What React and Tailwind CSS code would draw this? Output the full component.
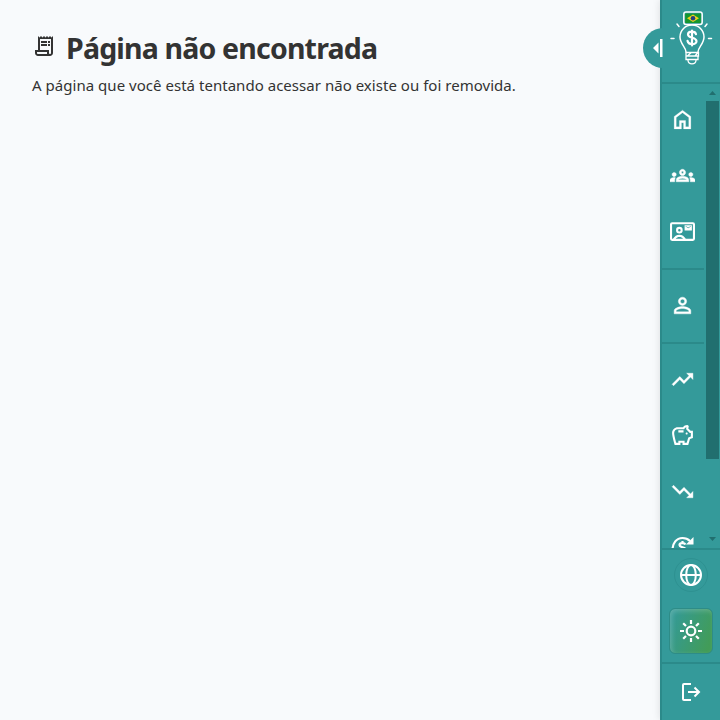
import {
  MdOutlineGroups,
  MdTrendingUp,
  MdTrendingDown,
  MdOutlineSavings,
  MdPersonOutline,
  MdOutlineReceiptLong,
} from "react-icons/md";

const navIcon =
  "size-[25px] [&_path:not([fill=none])]:stroke-current [&_path:not([fill=none])]:stroke-[0.4px]";

function HomeIcon() {
  return (
    <svg viewBox="0 -960 960 960" className="size-[25px]" fill="currentColor" stroke="currentColor" strokeWidth="8">
      <path d="M240-200h120v-240h240v240h120v-360L480-740 240-560v360Zm-80 80v-480l320-240 320 240v480H520v-240h-80v240H160Z" />
    </svg>
  );
}

function ContactMailIcon() {
  return (
    <svg viewBox="0 0 24 24" className="size-[25px]" fill="currentColor">
      <path fillRule="evenodd" d="M2 3h20q2 0 2 2v14q0 2-2 2H2q-2 0-2-2V5q0-2 2-2zm0 2v14h.8C4.200 16.500 6.500 15 9 15s4.800 1.500 6.200 4H22V5z" />
      <path fillRule="evenodd" d="M9 7.500a3.200 3.200 0 1 1 0 6.400 3.200 3.200 0 0 1 0-6.400zm0 2a1.200 1.200 0 1 0 0 2.400 1.200 1.200 0 0 0 0-2.400zM14 6h7v5h-7zm1 1.200 2.500 1.700L20 7.200V6.700l-2.500 1.500L15 6.700z" />
      <path d="M5.500 19h7C11 16.700 7 16.700 5.500 19z" fill="#349a9a" />
    </svg>
  );
}

function ExchangeIcon() {
  return (
    <svg viewBox="0 0 25 25" className="size-[25px]" fill="none" stroke="currentColor" strokeWidth="2.200">
      <path d="M2.500 15.500C2.500 8 6.500 3 12.500 3c3.500 0 6 1.500 7.500 3" />
      <path d="M23.500 2v7.500H16z" fill="currentColor" stroke="none" />
      <path d="M15.500 9.500c-1-2-6-2-6 .5 0 3 6 1.500 6 4.500 0 2.500-5 2.500-6.500 0M12.500 6v2" />
    </svg>
  );
}

function SunIcon() {
  return (
    <svg viewBox="0 0 24 24" className="size-6" fill="none" stroke="currentColor" strokeWidth="2.200">
      <circle cx="12" cy="12" r="4.300" />
      <path d="M12 1v4M12 19v4M1 12h4M19 12h4M4.200 4.200L7 7M17 17l2.800 2.800M4.200 19.800L7 17M17 7l2.800-2.800" />
    </svg>
  );
}

function Logo() {
  return (
    <svg viewBox="0 0 44 58" className="h-[58px] w-[44px]" fill="none" stroke="white" strokeWidth="1.500" strokeLinecap="round">
      <rect x="14.800" y="3" width="18.400" height="12.400" rx="2.200" fill="#349a9a" />
      <rect x="16.200" y="4.400" width="15.600" height="9.600" rx="0.500" fill="#15962f" stroke="none" />
      <path d="M18 9.200l6-3.700 6 3.700-6 3.700z" fill="#f0d21c" stroke="none" />
      <circle cx="24" cy="9.200" r="2.300" fill="#24417c" stroke="none" />
      <path d="M17 43c0-5-6-8-6-15A12 12 0 0 1 35 28c0 7-6 10-6 15" />
      <path d="M17 43.500h12.500v3.500H17zM17 47h12v3.500h-12zM19 51.500c.5 4.500 7.500 4.500 8 0M22.300 43.500l-4 3.500M26 47l2.500-3" strokeWidth="1.300" />
      <path d="M2 29.500h3M39.500 29.500h3M8 15l2 2.500M38 15l-2 2.500" />
      <path d="M27 25.200c-.8-3.600-8-3.200-8 .2 0 4.200 8.500 2.600 8.500 6.800 0 4-8.200 4-9-.4M23 21.500v15" strokeWidth="2.200" />
    </svg>
  );
}

function NavItem({ children }) {
  return (
    <a className="flex h-14 shrink-0 items-center pb-px pl-2">
      {children}
    </a>
  );
}

function Divider() {
  return <div className="my-2 h-0.5 w-[42px] shrink-0 bg-[#2b8a8a]" />;
}

export default function App() {
  return (
    <div className="flex h-[720px] w-[720px] overflow-hidden bg-[#f8fafc] font-['Noto_Sans',sans-serif] text-[#333]">
      <main className="min-w-0 flex-1 px-8 pt-7">
        <h1 className="flex h-10 items-center text-[28.500px] font-bold tracking-[-0.820px] whitespace-nowrap">
          <MdOutlineReceiptLong className="mr-[10px] -mt-1 size-6 shrink-0" />
          <span>Página não encontrada</span>
        </h1>
        <p className="mt-[5px] text-[15px] leading-6 tracking-[0.030px] whitespace-nowrap">
          A página que você está tentando acessar não existe ou foi removida.
        </p>
      </main>
      <aside className="relative flex w-[60px] shrink-0 flex-col border-l-2 border-[#2b8a8a] bg-[#349a9a] text-white shadow-[0_0_8px_rgba(0,0,0,0.12)]">
        <button className="absolute top-[28px] -left-[19px] flex h-10 w-5 items-center rounded-l-full bg-[#349a9a] pl-[10px]">
          <svg viewBox="0 0 10 18" className="h-[18px] w-[10px] shrink-0" fill="white">
            <path d="M0 9l5.500-5.500v11zM7 0h2.500v18H7z" />
          </svg>
        </button>
        <header className="flex h-[84px] shrink-0 justify-center border-b-2 border-[#2b8a8a] pt-[9px]">
          <Logo />
        </header>
        <div className="flex h-[464px] shrink-0 overflow-hidden">
          <nav className="flex w-11 flex-col pt-2">
            <NavItem><HomeIcon /></NavItem>
            <NavItem><MdOutlineGroups className={navIcon} /></NavItem>
            <NavItem><ContactMailIcon /></NavItem>
            <Divider />
            <NavItem><MdPersonOutline className={navIcon} /></NavItem>
            <Divider />
            <NavItem><MdTrendingUp className={navIcon} /></NavItem>
            <NavItem><MdOutlineSavings className="size-[25px]" /></NavItem>
            <NavItem><MdTrendingDown className={navIcon} /></NavItem>
            <NavItem><ExchangeIcon /></NavItem>
          </nav>
          <div className="flex w-[13px] flex-col items-center">
            <svg viewBox="0 0 7 4" className="mt-[7px] h-1 w-[7px]" fill="#216f6f"><path d="M0 4l3.500-4L7 4z" /></svg>
            <div className="mt-1.5 h-[358px] w-full bg-[#216f6f]" />
            <svg viewBox="0 0 7 4" className="mt-[78px] h-1 w-[7px]" fill="#216f6f"><path d="M0 0l3.500 4L7 0z" /></svg>
          </div>
        </div>
        <div className="flex h-[116px] shrink-0 flex-col items-center border-y-2 border-[#2b8a8a] pt-2">
          <button className="flex size-[34px] items-center justify-center rounded-full border border-[#2e9191]">
            <svg viewBox="0 0 24 24" className="size-6" fill="none" stroke="currentColor" strokeWidth="2">
              <circle cx="12" cy="12" r="10" />
              <ellipse cx="12" cy="12" rx="4.800" ry="10" />
              <path d="M2 12h20" />
            </svg>
          </button>
          <button className="mt-4 flex h-[46px] w-11 items-center justify-center rounded-md border border-[#2e8c87] bg-linear-[110deg] from-[#349a94] from-10% to-[#429c58] to-90% shadow-[inset_2px_2px_5px_rgba(255,255,255,0.2)]">
            <SunIcon />
          </button>
        </div>
        <div className="flex flex-1 items-center justify-center">
          <svg viewBox="0 0 20 20" className="size-5" fill="none" stroke="currentColor" strokeWidth="2">
            <path d="M10 2H3Q2 2 2 3v14q0 1 1 1h7M7 10h11M13.500 5.500L18 10l-4.500 4.500" />
          </svg>
        </div>
      </aside>
    </div>
  );
}
